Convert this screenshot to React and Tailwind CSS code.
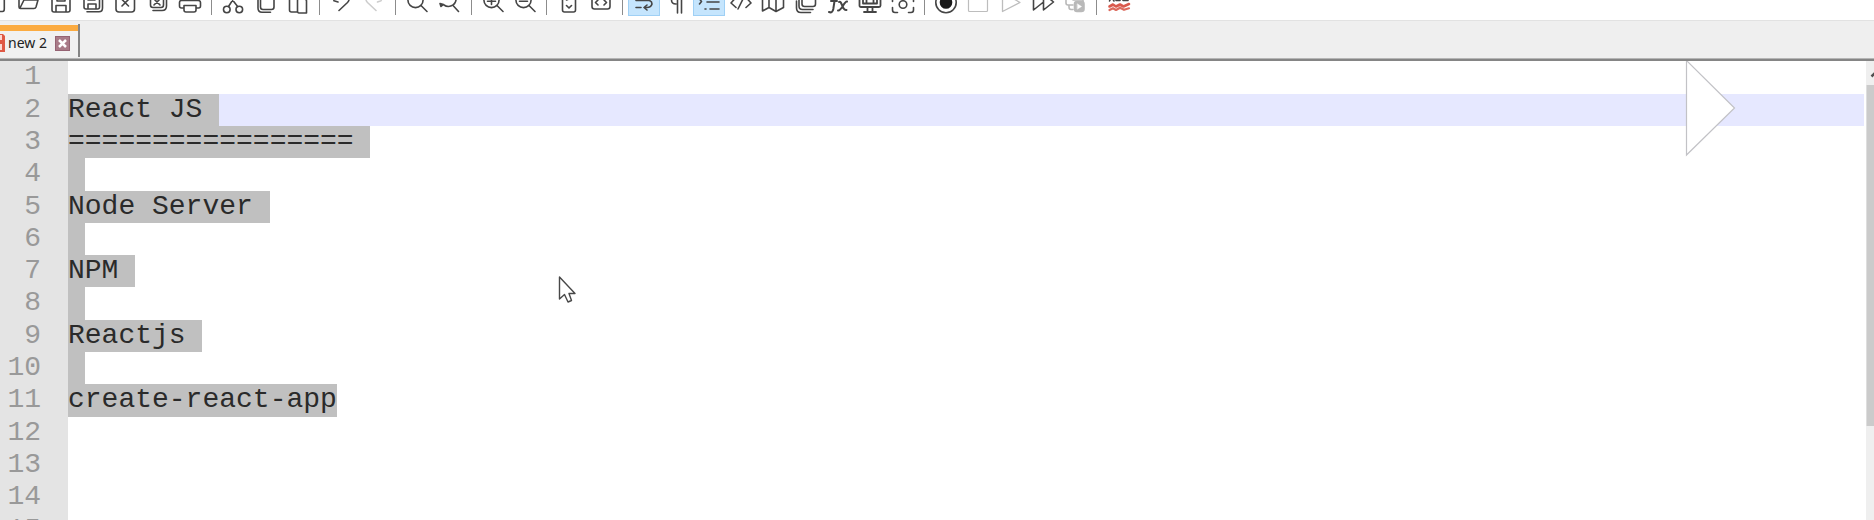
const ink = '#454545';

function Tool({ children, active, color = ink }) {
  return (
    <div className="flex h-full w-[32.29px] shrink-0 justify-center">
      <div className={active ? 'h-4 w-8 border-b border-x border-[#9fd0f5] bg-[#c5e5fd]' : 'h-5 w-8'}>
        <svg
          className={active ? '-ml-px block h-5 w-8' : 'block h-5 w-8'}
          viewBox="0 0 32 20"
          fill="none"
          stroke={color}
          strokeWidth="1.6"
          strokeLinecap="round"
          strokeLinejoin="round"
        >
          {children}
        </svg>
      </div>
    </div>
  );
}

function Separator() {
  return (
    <div className="flex w-[11.2px] shrink-0 justify-center">
      <div className="h-[15px] w-px bg-[#8c8c8c]" />
    </div>
  );
}

function Toolbar() {
  return (
    <div className="h-[21px] shrink-0 overflow-hidden border-b border-[#e2e2e2] bg-white">
      <div className="-ml-[20px] flex h-full">
        <Tool><path d="M12 11.500H22.500Q24.300 11.500 24.300 9V-2" /></Tool>
        <Tool><path d="M7 -2V7Q7 8.500 8.500 8.500H22Q23.500 8.500 24 7L26 0H12L8 8" /></Tool>
        <Tool>
          <path d="M7 -2V10Q7 12 9 12H23Q25 12 25 10V-2M11 12V5.500H21V12M12 -1V1H20V-1" />
        </Tool>
        <Tool>
          <path d="M7 -2V7Q7 9 9 9H20.500Q22.500 9 22.500 7V-2M11 9V4H19V9M11 -1V0H18" />
          <path d="M10 11.700H22Q25.500 11.700 25.500 8V-2" />
        </Tool>
        <Tool>
          <path d="M7 -2V9Q7 12 10 12H22.500Q25.500 12 25.500 9V-2" />
          <path d="M13 -0.500L19.500 6M19.500 -0.500L13 6" />
        </Tool>
        <Tool>
          <path d="M8.500 -2V5Q8.500 7.500 11 7.500H19Q21.500 7.500 21.500 5V-2M12 -1L18 5M18 -1L12 5M11 10.500H20Q24.500 10.500 24.500 6V-2" />
        </Tool>
        <Tool>
          <path d="M9 8H7.500Q5.500 8 5.500 6V2.500Q5.500 0.500 7.500 .5H24Q26.500 .5 26.500 2.500V6Q26.500 8 24.500 8H23M10 5.500H22V10Q22 12 20 12H12Q10 12 10 10ZM10 0V-3M22 0V-3" />
        </Tool>
        <Separator />
        <Tool>
          <circle cx="9.800" cy="9.500" r="3.300" />
          <circle cx="22.300" cy="9.500" r="3.300" />
          <path d="M11.500 6.500L17 -2M20.600 6.500L14 -2" />
        </Tool>
        <Tool>
          <path d="M10.500 -2V7Q10.500 9.500 13 9.500H21.500Q24 9.500 24 7V-2M8 0V8Q8 12 12 12.300H20.500" />
        </Tool>
        <Tool>
          <path d="M15 12H9.500Q7.500 12 7.500 10V-2M17 -1H22Q24.500 -1 24.500 1V13H17Q15.500 13 15.500 11V.5Q15.500 -1 17 -1" />
        </Tool>
        <Separator />
        <Tool><path d="M8.500 -2L9 .8L13 2M24 -2Q24.500 .5 22.500 2.500L14 10.500" /></Tool>
        <Tool color="#cdcdcd"><path d="M24 -2L23 .8L19.500 2M8 -2Q7.500 .5 9.500 2.500L18 10.500" /></Tool>
        <Separator />
        <Tool><circle cx="14.500" cy="0" r="7.600" /><path d="M20 5.500L26 11.500" /></Tool>
        <Tool>
          <path d="M23 0A7.700 7.700 0 0 1 11 5M20.500 6L25.500 11.500" />
          <path d="M7 3.500L10.500 4.500L8 6.500Z" fill={ink} />
        </Tool>
        <Separator />
        <Tool>
          <circle cx="14.500" cy="0" r="7.600" /><path d="M20 5.500L26 11.500M10.500 1.200H18.500M14.500 -2V4.500" />
        </Tool>
        <Tool>
          <circle cx="14.500" cy="0" r="7.600" /><path d="M20 5.500L26 11.500M10.500 1.200H18.500" />
        </Tool>
        <Separator />
        <Tool>
          <path d="M9.500 -2V10Q9.500 12 11.500 12H20.500Q22.500 12 22.500 10V-2M13.500 5.500L16 8L18.500 5.500M13.500 0L16 -1" />
        </Tool>
        <Tool>
          <path d="M7 -2V6.500Q7 9 9.500 9H22.500Q25 9 25 6.500V-2M13 0L10.500 2.500L13 5M19 0L21.500 2.500L19 5" />
        </Tool>
        <Separator />
        <Tool active>
          <path d="M8 .500H21Q24 1 24 4Q23 7.500 19 7.500H16.500M19 5L16 7.500L19 10M8 7.500H13" />
        </Tool>
        <Tool><path d="M16.500 -2V13M20.500 -2V13M15 4Q10.500 4 10.500 0" /></Tool>
        <Tool active>
          <path d="M14 2H26M17 9H26M6.500 -1L8.500 1.500L6.500 4M12 9H13" />
        </Tool>
        <Tool><path d="M10.500 -2L6 3L11 7.500M21.500 -2L26 3L21 7.500M18.500 -2L13 9" /></Tool>
        <Tool>
          <path d="M5.500 -2V11L12 7.500L19 11.500L26.500 7.500V-2M12 -2V7.500M19 -2V11.500" />
        </Tool>
        <Tool>
          <path d="M12 -2V4Q12 6.500 14.500 6.500H23Q25.500 6.500 25.500 4V-2M9 -1V6Q9 9.500 12.500 9.500H23M6.500 1V8Q6.500 12.500 11 12.500H20.500" />
        </Tool>
        <Tool>
          <path d="M7 12Q10.500 13.500 11.300 9L13 -2M9 1H15M17 2C20 0 20 11 24.500 10M25 1.500C22 1 20 11 16 10.500" strokeWidth="2" />
        </Tool>
        <Tool>
          <path d="M5.500 -2V5.500Q5.500 7 7 7H25Q26.500 7 26.500 5.500V-2M9 -1V3.500H23V-1M12.500 0V3M19.500 0V3M13.500 7V11.500M18.500 7V11.500M10 12H22" strokeWidth="1.800" />
        </Tool>
        <Tool>
          <circle cx="16" cy="4.500" r="3.800" />
          <path d="M5.500 7.500V10Q5.500 12.500 8 12.500H10.500M26.500 7.500V10Q26.500 12.500 24 12.500H21.500M5.500 1.500V0M26.500 1.500V0" />
        </Tool>
        <Separator />
        <Tool>
          <circle cx="16" cy="2.500" r="10.200" />
          <circle cx="16" cy="2.500" r="5.500" fill="#1a1a1a" stroke="#1a1a1a" />
        </Tool>
        <Tool color="#bdbdbd"><path d="M6.500 -2V10.500Q6.500 11.500 7.500 11.500H24.500Q25.500 11.500 25.500 10.500V-2" strokeWidth="1.200" /></Tool>
        <Tool color="#bdbdbd"><path d="M7.500 -5V11.500L25 2.500L12 -5" strokeWidth="1.300" /></Tool>
        <Tool><path d="M6.500 -5V10L16.500 2V10L26.500 2L18 -5M16.500 2V-4" /></Tool>
        <Tool color="#b9b9b9">
          <path d="M7 -2V3Q7 5 9 5H14M10 5V7Q10 9.500 12 9.500H14M14 0H24V4" />
          <rect x="15.500" y="1.500" width="9.500" height="10" rx="2.500" fill="#b9b9b9" />
          <path d="M18.500 4L22.500 6.500L18.500 9Z" fill="white" stroke="white" strokeWidth=".5" />
        </Tool>
        <Separator />
        <Tool>
          <path d="M6.500 1L8.500 -3L11 1M13 -2V.5H17V-2M20 -2V.5H25V-1" />
          <path d="M6.500 6.500L10 4.500L13 6.500L17 4.500L20.500 6.500L26 4" stroke="#d9594c" strokeWidth="2.600" />
          <path d="M6.500 10L10 8.300L13 10L17 7.800L21 9.800L26 8.300" stroke="#dc6a5d" strokeWidth="2.200" />
        </Tool>
      </div>
    </div>
  );
}

function TabBar() {
  return (
    <div className="flex h-[37px] shrink-0 items-start bg-[#efefef] pt-[3px]">
      <div className="flex h-[33px] w-20 flex-col border-r-2 border-[#858585] bg-[#f1f1f1]">
        <div className="mt-px h-[6px] shrink-0 bg-[#fbab41]" />
        <div className="flex h-[24px] items-center">
          <svg className="h-[18px] w-[5px] shrink-0" viewBox="0 0 5 18">
            <path d="M0 0H3L5 2V18H0Z" fill="#df5945" />
            <path d="M0 1H2V6H0ZM0 10H2V16H0Z" fill="#fbd8d2" />
          </svg>
          <span className="ml-[3px] w-[42px] whitespace-nowrap font-['Noto_Sans',sans-serif] text-[14px] leading-none text-[#222]">
            new 2
          </span>
          <svg className="ml-[5px] h-[15px] w-[15px] shrink-0" viewBox="0 0 15 15">
            <rect x=".5" y=".5" width="14" height="14" fill="#a97b88" stroke="#956373" />
            <path d="M4 4L11 11M11 4L4 11" stroke="white" strokeWidth="2.500" />
          </svg>
        </div>
      </div>
    </div>
  );
}

const lines = [
  { text: '' },
  { text: 'React JS', selected: 'w-[151.2px]', current: true },
  { text: '=================', selected: 'w-[302.4px]' },
  { text: '', selected: 'w-[16.8px]' },
  { text: 'Node Server', selected: 'w-[201.6px]' },
  { text: '', selected: 'w-[16.8px]' },
  { text: 'NPM', selected: 'w-[67.2px]' },
  { text: '', selected: 'w-[16.8px]' },
  { text: 'Reactjs', selected: 'w-[134.4px]' },
  { text: '', selected: 'w-[16.8px]' },
  { text: 'create-react-app', selected: 'w-[268.8px]' },
  { text: '' },
  { text: '' },
  { text: '' },
  { text: '' },
];

function Editor() {
  return (
    <div className="relative flex min-h-0 flex-1 overflow-hidden font-['Liberation_Mono',monospace] text-[28px] leading-[32.3px]">
      <div className="w-[68px] shrink-0 bg-[#e4e4e4] pr-[27px] pt-[0.4px] text-right text-[#999999]">
        {lines.map((_, i) => (
          <div key={i} className="h-[32.3px]">{i + 1}</div>
        ))}
      </div>
      <div className="min-w-0 flex-1 pr-[2px] pt-[0.4px]">
        {lines.map((line, i) => (
          <div key={i} className={line.current ? 'h-[32.3px] bg-[#e6e8ff]' : 'h-[32.3px]'}>
            {line.selected && (
              <div className={`${line.selected} h-full whitespace-pre bg-[#c0c0c0] text-[#2a2a2a]`}>{line.text}</div>
            )}
          </div>
        ))}
      </div>
      <div className="flex w-2 shrink-0 flex-col bg-[#efefef]">
        <svg className="h-6 w-2 shrink-0" viewBox="0 0 8 24" fill="none">
          <path d="M5.500 15.500L9 12" stroke="#505050" strokeWidth="2.500" />
        </svg>
        <div className="h-[341px] border-l border-[#dedede] bg-[#cbcbcb]" />
      </div>
      <svg className="absolute left-[1685px] top-0 h-[96px] w-[52px]" viewBox="0 0 52 96">
        <path d="M1.500 -.5L49.500 47L1.500 94Z" fill="white" stroke="#c2c2c6" strokeWidth="1.200" />
      </svg>
      <svg className="absolute left-[557px] top-[214px] h-[30px] w-[20px]" viewBox="0 0 20 30">
        <path d="M2.500 2V24L7.500 19.500L11 27L14.500 25.500L12 18.500H18Z" fill="white" stroke="#484848" strokeWidth="1.400" strokeLinejoin="round" />
      </svg>
    </div>
  );
}

export default function App() {
  return (
    <div className="flex h-[520px] w-full flex-col overflow-hidden bg-white">
      <Toolbar />
      <TabBar />
      <div className="h-[3px] shrink-0 border-b-2 border-t border-b-[#858585] border-t-[#b5b5b5]" />
      <Editor />
    </div>
  );
}
